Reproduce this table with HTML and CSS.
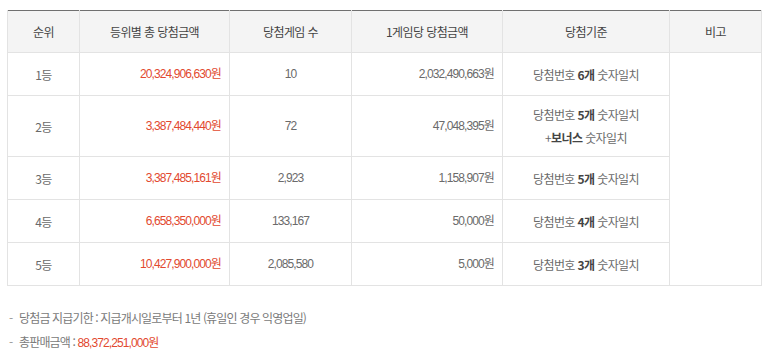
FILE: index.html
```html
<!DOCTYPE html>
<html lang="ko">
<head>
<meta charset="utf-8">
<link rel="stylesheet" href="styles.css">
</head>
<body>
<div class="wrap">
  <table class="result">
    <colgroup>
      <col class="c1"><col class="c2"><col class="c3"><col class="c4"><col class="c5"><col class="c6">
    </colgroup>
    <thead>
      <tr>
        <th>순위</th>
        <th>등위별 총 당첨금액</th>
        <th>당첨게임 수</th>
        <th>1게임당 당첨금액</th>
        <th>당첨기준</th>
        <th>비고</th>
      </tr>
    </thead>
    <tbody>
      <tr>
        <td>1등</td>
        <td class="amt red num">20,324,906,630원</td>
        <td class="num">10</td>
        <td class="amt num">2,032,490,663원</td>
        <td>당첨번호 <strong>6개</strong> 숫자일치</td>
        <td rowspan="5"></td>
      </tr>
      <tr class="tall">
        <td>2등</td>
        <td class="amt red num">3,387,484,440원</td>
        <td class="num">72</td>
        <td class="amt num">47,048,395원</td>
        <td>당첨번호 <strong>5개</strong> 숫자일치<br>+<strong>보너스</strong> 숫자일치</td>
      </tr>
      <tr>
        <td>3등</td>
        <td class="amt red num">3,387,485,161원</td>
        <td class="num">2,923</td>
        <td class="amt num">1,158,907원</td>
        <td>당첨번호 <strong>5개</strong> 숫자일치</td>
      </tr>
      <tr>
        <td>4등</td>
        <td class="amt red num">6,658,350,000원</td>
        <td class="num">133,167</td>
        <td class="amt num">50,000원</td>
        <td>당첨번호 <strong>4개</strong> 숫자일치</td>
      </tr>
      <tr>
        <td>5등</td>
        <td class="amt red num">10,427,900,000원</td>
        <td class="num">2,085,580</td>
        <td class="amt num">5,000원</td>
        <td>당첨번호 <strong>3개</strong> 숫자일치</td>
      </tr>
    </tbody>
  </table>
  <ul class="notes">
    <li>당첨금 지급기한 : 지급개시일로부터 1년 (휴일인 경우 익영업일)</li>
    <li>총판매금액 : <span class="red num">88,372,251,000원</span></li>
  </ul>
</div>
</body>
</html>
```

FILE: styles.css
```css
html, body {
  margin: 0;
  padding: 0;
  background: #fff;
}
body {
  font-family: "Noto Sans CJK KR", "Noto Sans", sans-serif;
  font-size: 12px;
  color: #6a6a6a;
}
.wrap {
  padding: 10px 13px 0 7px;
}
.result {
  width: 754px;
  border-collapse: collapse;
  table-layout: fixed;
  border-top: 1px solid #707070;
  letter-spacing: -0.6px;
}
.c1 { width: 72px; }
.c2 { width: 150px; }
.c3 { width: 122px; }
.c4 { width: 151px; }
.c5 { width: 167px; }
.c6 { width: 92px; }
.result th,
.result td {
  border: 1px solid #e3e3e3;
  text-align: center;
  vertical-align: middle;
  padding: 0 8px;
  line-height: 23px;
}
.result thead th {
  border-top: 0;
  background: #f4f4f4;
  height: 41px;
  font-weight: normal;
  color: #444;
}
.result tbody td {
  height: 42px;
}
.result tbody tr.tall td {
  height: 60px;
}
.result td.amt {
  text-align: right;
}
.num {
  font-family: "Liberation Sans", "Noto Sans CJK KR", sans-serif;
  letter-spacing: -0.9px;
}
.red {
  color: #e2492f;
}
.result strong {
  font-weight: bold;
  color: #444;
}
.notes {
  list-style: none;
  margin: 20px 0 0 0;
  padding: 0 0 0 2px;
  letter-spacing: -0.85px;
  color: #7a7a7a;
}
.notes li {
  line-height: 24px;
}
.notes li::before {
  content: "-";
  display: inline-block;
  width: 10px;
  color: #999;
}
```
